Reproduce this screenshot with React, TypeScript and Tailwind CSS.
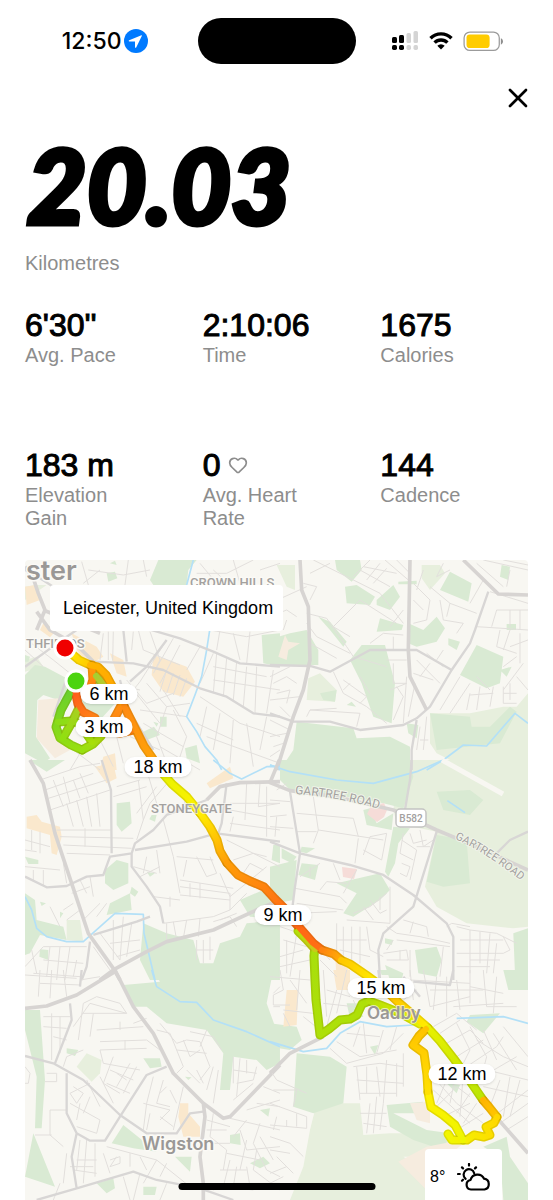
import { Heart, X } from 'lucide-react'

const stats = [
    { value: "6'30''", label: 'Avg. Pace' },
    { value: '2:10:06', label: 'Time' },
    { value: '1675', label: 'Calories' },
    { value: '183 m', label: 'Elevation Gain' },
    { value: '0', label: 'Avg. Heart Rate', heart: true },
    { value: '144', label: 'Cadence' },
]

const markers = [
    { label: '6 km', place: 'left-[84px] top-[134px]' },
    { label: '3 km', place: 'left-[79px] top-[167px]' },
    { label: '18 km', place: 'left-[133px] top-[207px]' },
    { label: '9 km', place: 'left-[258px] top-[355px]' },
    { label: '15 km', place: 'left-[356px] top-[428px]' },
    { label: '12 km', place: 'left-[437px] top-[514px]' },
]

// Map tiles, drawn at three units per pixel
const tiles = [
    {
        x: 0,
        y: 550,
        light: 'M140 105L75 150V110L110 105ZM75 330L110 320 130 350 75 365Z',
        parks: 'M475 30H590L565 60 560 105H460L450 90ZM75 375L105 345 135 350 200 385 235 380 215 425 190 455 130 435 112 450 108 560 150 625 130 640 75 610ZM300 435L350 455 300 510 250 490 240 450ZM430 545L462 530 480 555 440 570ZM555 595L590 585 600 640 560 625ZM480 500H500V530H480ZM785 255L840 250V350L790 340ZM320 70L345 65 352 85 325 95ZM75 315L90 320 85 335H75ZM460 515L475 520 470 530ZM330 40L345 32 350 45Z',
        beige: 'M115 450L175 445 165 540 210 600 165 625 110 565Z',
        shops: 'M460 315L520 335 560 350 585 395 550 440 490 425 455 375ZM75 110L105 105 120 150 80 165ZM215 250L290 290 310 320 265 345 230 300ZM330 310L370 330 380 380 350 370ZM155 60L200 58 205 75 160 80ZM130 220L170 240 150 262 120 240ZM310 620L345 610 350 660 300 660Z',
        water: 'M580 30L560 105M630 235L620 300 605 380 585 435 560 500 590 545 615 590 650 630 665 660',
        minor: 'M75 265L160 330 210 370M75 300L130 350M75 355L160 290M300 60L250 100M245 35L265 105M265 60L370 75 450 60M385 30L375 105M430 30L440 80M600 40L650 100M590 70H680L760 30M700 30L720 100M640 60L690 105M780 60L840 40M310 250L300 330M325 245V330M340 245L338 332M400 245L395 300M415 240L430 300M450 245L480 330 470 350M430 300L540 345M500 270L420 395 400 420M520 265L460 370M540 285L480 400M600 290L560 360M640 310L600 400M380 390L440 460 520 430M400 420L480 520M440 400L500 470 570 460M490 420L540 500M500 360L480 425M520 370L500 430M540 375L520 435M560 385L540 440M330 400L420 420M350 410L330 440M650 310L640 430M680 325L670 440M710 335L700 450M740 350L730 470M770 350L765 490M640 350L800 380M630 240L740 260 840 240M660 240L650 300M700 250L720 330M750 245L740 340M640 390L840 420M600 440L720 520 840 560M620 470L600 560M660 490L640 600M700 510L690 640M740 520L760 650M620 560L840 640M590 520L700 570M500 470L470 560 500 640M520 480L560 560 530 650M420 480L560 500M430 520L550 590M480 590L600 660M390 560L480 600M350 560L370 640M300 570L340 650M220 600L300 660M240 610L210 660M800 500L780 600M820 360L800 490M740 200L840 230',
        medium: 'M280 335L400 340 490 360 600 415 680 440 760 490 840 500M420 230L540 265 640 305 720 340 840 350M390 395L440 350 500 270M370 240L380 335M75 60L105 75 190 130M360 390L380 470 460 600M75 350L200 260 230 240M200 385L160 500',
        major: 'M75 50L100 85 115 130 135 180 110 240M110 185L150 240 230 285 280 335M130 180L300 250',
    },
    {
        x: 270,
        y: 550,
        light: 'M455 45L510 45 525 70 480 120 455 85ZM20 45L75 45 75 120 50 110ZM115 385L150 370 200 420 195 455 110 450ZM480 490H600L700 470H740L774 430V660H600L500 610 480 580Z',
        parks: 'M195 30H270L275 60 245 95 200 60ZM225 110L260 105 315 140 300 165 230 160ZM320 150L370 105 390 140 360 180 320 165ZM540 65L605 100 595 155 510 120ZM415 220L460 240 500 200 525 235 500 275 440 290 415 280ZM0 268L60 250 110 240 145 300V345H0ZM330 205L400 225 395 240 320 245ZM240 330L275 285 345 285 375 400 365 520 310 500 275 400ZM620 285L700 320 690 400 650 415 570 375ZM695 45L720 50 715 90 690 80ZM80 515L250 535 260 565 360 560 420 590V660H30L70 600ZM480 490L600 500 605 530 660 530 720 470 740 485 690 580 500 600ZM145 200L180 215 230 275 220 290 180 240ZM150 430L200 420 195 455 160 450ZM535 265L570 275 560 300 535 285ZM690 360L725 350 710 380ZM410 520L445 525 440 565 415 550ZM385 95L440 92V103H385ZM710 222H738V240H710ZM230 465L245 455 258 470Z',
        beige: 'M45 255L55 275 90 280 55 300 50 330 25 320Z',
        shops: '',
        water: 'M0 645L15 650 30 660M470 660L520 630 580 585 650 588 735 490 774 520',
        minor: 'M130 30L330 130 400 220M120 70L180 40M100 100L140 110 120 150M270 60L360 110M300 30L250 80M330 40L290 90M350 55L310 100M280 50L380 70M345 30L415 90M380 30L420 70M190 230L270 150 380 220M240 260L190 230M110 190L170 205 230 290 250 320M110 220L140 260 240 310M120 280L200 325M300 280L340 250 400 255M370 260V300M400 180L360 230M430 100L480 150 470 210 430 220M430 150L460 180M480 110L540 160 620 190M460 60L440 120M520 40L500 80 540 60M510 150L520 210 580 220 560 250M540 160L530 200M640 90L600 160M680 180H774M680 180L665 230M720 180V230M750 180V240M620 230L774 240M690 240L680 290 740 310M720 240L700 300M750 250V340M774 270L720 290M740 320L700 350M760 340L700 420M470 310L520 350M440 330L510 400M480 340L450 380M520 300L500 330M430 370L490 390M350 330H410M370 340V400H410M360 420L410 400M190 365L220 430 290 470 350 520M220 390L290 440 270 460M240 400L220 420M250 320L350 350M270 380L300 430M120 480L270 490 260 530M110 500L120 480 200 475M380 410L400 440 370 510M410 380L400 520M435 400L415 500M0 380L60 350M10 400L50 380 80 400M20 430L60 420 50 460M0 450L90 440M30 470L60 500M0 510L60 540M0 560L50 550M10 590L40 580M0 620L30 600M570 380L510 480M600 400L540 490M600 430L590 480M630 410L620 480M600 435L670 430M670 410L660 470M700 410V460H740M700 430H740M720 400V450M620 380L660 420M740 380L774 420M0 200L50 180 80 200M0 160L110 110M50 210L40 240M640 30L774 60M620 40L700 110M700 30L774 45M660 125L774 160M720 60L710 110M450 530L440 600M470 500L460 600M450 570H475',
        medium: 'M0 345L120 348 180 365 300 300 440 300 545 360M655 125L615 240 600 280 545 360 480 470 440 505 400 525 270 540 180 515 70 515 0 490M440 510L425 600V660',
        major: 'M90 30L95 120 115 170 120 330 100 420 70 500 20 660M420 30L415 300 420 380 470 480M580 30L685 132 774 135',
    },
    {
        x: 0,
        y: 760,
        light: 'M200 480L240 480 250 545 200 540Z',
        parks: 'M85 0H195L140 35ZM350 130L390 125 395 190 365 215 350 195ZM315 330L350 300 385 310V370L340 390 315 370ZM330 430L390 400 395 450 320 465ZM75 400L105 420 110 480 190 500 200 540 120 525 90 580 75 585ZM430 490L500 520 580 540 600 610H640L660 550 720 530 740 490 840 480V660H450L420 600ZM720 420L790 390 840 440V480L750 470ZM75 290L115 300V312H85ZM120 568L145 570V600L118 590ZM455 165L470 165 465 185 448 178ZM440 335L465 340 450 350ZM820 255H840V310L815 300ZM120 425L138 430 125 438ZM180 455L190 460 180 475ZM395 380L415 395 405 410 390 400Z',
        beige: '',
        shops: 'M80 170L110 165 125 185 180 200 185 230 170 285 155 280 150 225 80 205ZM285 20L340 10 350 55 320 70ZM620 70L690 20 700 55 630 85Z',
        water: 'M75 410L95 450 110 505 140 530 200 545 250 545 345 460 430 463 432 520 465 660M640 0L690 40 725 57 800 20 840 20',
        minor: 'M120 60L240 20 300 10M135 90L280 40M145 115L320 60M150 150L330 90M160 60L190 140M190 50L210 130M220 60L240 115M240 40L265 100M200 130L220 200M230 120L250 200M260 110L275 200M290 100L300 200M170 210H335M180 230L400 235M190 255L395 265M200 280L330 285M255 205V260M350 80L420 60M340 110L440 80M415 60L430 180M440 30L470 130M470 80L410 160M510 60L450 130 430 180 410 240M500 160L580 130M560 150L550 110M490 180L520 290 540 400M530 290L640 300M560 300L550 350M590 290L620 350 650 340 630 290M540 360L700 385M540 380L690 400M540 405L690 420M570 370V410M600 370V415M660 340L690 410 800 320M700 300L760 280 800 290M730 340L750 310 790 330M680 240L840 320M700 170L690 215M740 70L735 180M780 70L775 140 840 130M690 130H840M690 150L800 170M690 190L840 210M800 80V230M400 320L470 340M420 350L480 320M440 290L430 340M470 270L480 340M460 410L540 420M510 410V440M490 490L640 470 690 450M560 480L550 535M600 475L595 530M500 490V540M520 485L530 540M690 400V450L740 400M710 500L690 470 640 485M75 240L150 260M75 270L110 275M95 210V270M120 215V280M75 320L180 330M100 330V365M130 330V375M190 310L200 370M240 360L260 400M270 350L280 410M215 400L270 380M220 430L190 450M240 450L200 480M150 440L180 500M300 430L250 480M290 470L320 430M340 480V600M370 470L360 600M395 490L380 590M300 520L360 600M330 550L420 540M350 590L420 570M75 620L130 560 260 560M95 570L110 640M130 600L250 610M150 560L140 650M180 560L170 660M210 560L195 660M100 640L240 650M230 600L220 650M590 540V600M610 540V610M630 530V600M590 570H640M280 560L330 630M660 480L710 460',
        medium: 'M75 350L140 382 200 378 260 350 310 345 330 290 395 280 405 250 460 210 500 165 620 120M305 0L333 90 335 280M395 280V320L440 380 480 440 490 490M405 270L560 245 650 220 840 245M680 70L665 190 655 220M270 545L260 620 245 660M280 525L410 485 450 470',
        major: 'M90 0L130 70 165 220 215 370 265 520 340 625 360 660M300 660L340 630 440 575 500 545 640 510 770 450 840 420M620 120L660 80 720 68 840 65',
    },
    {
        x: 270,
        y: 760,
        light: 'M390 0H774V500L730 505 590 490 500 440 465 380 500 215 380 190 370 150Z',
        parks: 'M30 0H420L430 50 400 145 340 130 200 105 60 90 30 60ZM500 225L590 240 600 370 520 380 470 365ZM0 320L80 300 70 420 20 430 0 380ZM200 370L330 340 360 390 330 420 250 470 220 460 260 400ZM435 570L500 560 515 600 500 650 445 640ZM730 520L774 505V640H735ZM370 200L420 205 385 250 375 310 355 350 345 335ZM0 530L25 500V660H0ZM280 150L300 145 320 190 370 160 365 210 290 195ZM95 310L145 315 135 360 85 345ZM95 260L135 265 110 280 90 275ZM35 265L80 290 65 310 35 295ZM345 535L370 540 365 555 345 550ZM345 615L400 640 395 660H360ZM500 95L600 90 640 120 600 165 520 150Z',
        beige: '',
        shops: 'M195 580L230 600 240 660H200Z',
        water: 'M0 15L60 35 200 60 310 70 440 35 520 0M532 122L585 158',
        minor: 'M0 60L20 80M20 90L50 70M0 120L60 125M0 170L50 165M20 170L15 230M80 160L250 175 265 230M130 110L145 210 340 240M145 210L130 250M80 215H140M265 235L255 310M280 285L300 230 350 220 335 300 280 270M0 200L70 205M75 385L210 410 230 430M80 430L220 450M75 460L200 455M150 390L170 365 230 370M90 350L150 310M120 320V350M190 310L210 360M260 330L220 400M395 240L440 270M400 220L390 280 430 300M420 220L430 250 470 240M450 210L460 260 490 240M440 260L480 260M440 270L420 360M395 310L420 320 410 350 390 340M360 380V490M250 460L300 440 350 400M280 440L310 480M300 420L330 460 350 450M230 480L360 490M330 410V450M200 490V600M220 500V590M245 500V600M270 500V610M200 540H290M210 570L300 590M290 500L300 570 340 590M350 500L380 520 450 530 540 550M380 540L540 560M400 480L470 500 475 530M430 485L420 520M340 580L410 570 415 600 350 600M350 570L370 540M390 570V600M530 500L545 490 600 500M560 500L600 510 680 520 740 550M570 540H700M600 510V640M560 580H700M630 515V610M660 520L650 640M680 550L670 640M700 530L720 570 700 580M600 600H690M560 620L660 620M30 500L120 530 180 600M40 540L110 560M30 590L100 570M50 540V640M80 520L60 650M30 620L120 600M0 500L60 480M150 600L200 650M420 570V650M520 560L510 650',
        medium: 'M60 95L90 280 75 380 65 460M0 245L90 280 240 315 340 345 430 405 530 490 550 530V660M500 215L430 440 340 520 325 570 330 660M425 0L420 60 405 150M670 290L720 240 774 215',
        major: 'M28 0L0 68 60 92 200 110 370 150 500 210 620 260 774 330',
    },
    {
        x: 0,
        y: 970,
        light: 'M230 290L260 250 305 270 300 310 275 335Z',
        parks: 'M370 45L480 35 460 0H820L800 100 840 210V280L800 300 770 270 700 260 690 360H660L670 250 620 180 500 160 440 110 400 110ZM75 120H120L135 330 125 475H105L110 320 75 180ZM100 490L165 650 75 620ZM430 265L480 265 485 290 450 295ZM335 520L370 465 470 545 400 535ZM290 640L340 625 345 655 320 670ZM525 560L575 560 570 605ZM690 495L720 490 722 525 690 520ZM200 235L235 240 225 258 200 250ZM750 580L790 560 810 580 780 595ZM430 650L470 650 465 675 430 675ZM780 420L810 415 805 440ZM555 320L575 322 565 330Z',
        beige: '',
        shops: 'M540 400H565V430L600 470V500H550L535 440Z',
        water: 'M455 0L470 50 540 95 590 97 640 150 740 185 840 230',
        minor: 'M75 15L230 25M120 0L115 80M155 0L150 85M190 0L200 80M120 40L240 45M240 30L300 20M130 140H210M130 170L200 175M155 130V270M180 140V250M160 200L200 210M220 170L270 100 380 130 360 100 290 80 250 100 235 210M245 130H380M280 130L270 200M300 215L440 210 480 240M300 240L440 235M290 180L430 170M360 155V180M400 160L440 145M375 210V240M300 240L310 280 420 300M340 260L310 340 360 370M390 280L350 350M410 290L370 370M330 300L400 330M320 340L390 370M350 310L380 330M250 240L200 260 190 290M260 330L300 410M300 320L340 400M270 340L210 370 230 400 250 370 220 350M210 400L300 450 290 490 230 470M240 400L230 450M270 380L250 430M150 420H200M150 420V495L190 530M105 495H155M140 310H170V335H135M470 180L510 190 550 290 530 310M480 160L530 220 560 210 600 215 630 290 600 330M530 240L620 250M550 210L570 260 600 240M570 185L640 200 665 240M620 180L600 230M640 290L620 360M655 300L640 400M560 300L600 340M590 300L610 340M700 260V340M720 265L710 380M700 300L770 310M740 270V310M770 290L760 330 710 340M460 320L440 400 430 480M490 330L470 400 510 410M500 350L480 370M430 400L510 420 480 450M450 430L440 480M510 360L530 400M480 440L520 470M550 350L520 480M640 430L630 500 680 540 670 600M690 445L840 480M740 450L700 500M780 460L760 520M720 480L740 540 840 530M740 510L720 600M760 520L800 600 840 620M780 500L820 570M680 550L780 570M690 570L670 650 760 660M710 590L700 650M740 590L750 650M660 600H740M770 540L760 600 840 660M620 450L690 470M620 480H680M320 530L470 570 570 650M310 550L330 610M350 560L330 590 360 580V560L330 570M390 550V590M420 560L440 600M470 570L430 640M500 580L480 620M240 510L230 600M260 510L250 640M285 520V620M200 550L190 640M230 570H290M220 600L290 610M75 290L90 310 85 340H75M210 590H280M700 390L760 340M770 400L840 410M740 420L840 390M790 350L840 370M820 70L840 50M820 110H840M620 520L690 520M180 640L160 690M370 620L390 690M420 610L400 690M500 640L480 690M640 660L700 640 840 640',
        medium: 'M75 258L160 280 250 330 360 435 440 490 530 490 570 430 610 425M210 100L215 150 165 280M200 310V430L230 490 270 512H315L360 440 440 315 500 290M110 690L230 655 400 605 470 630 600 655 700 690M230 490L215 560 230 655M240 50L245 0',
        major: 'M75 115L140 108 230 75 345 5M345 0L400 110 460 190 520 310 610 400 670 445 690 440 840 285M610 400L615 440 600 560 610 640V690',
    },
    {
        x: 270,
        y: 970,
        light: 'M140 400L270 400 280 495 360 490 540 490 560 530 460 560 400 560 470 600 480 690H60L100 590 120 480Z',
        parks: 'M80 250L180 260 230 290 220 400 130 430 70 410ZM350 405L460 395 450 430 370 430 470 480 540 490 520 540 430 510 360 470ZM600 135L690 130 640 190 590 155ZM700 0H774V60H715ZM0 160L80 170 95 210 60 240 0 230ZM230 100H260L280 140 240 145ZM640 530L710 500 720 560 774 640V690H700L690 560ZM300 230L325 225 315 255ZM530 340L570 345 560 370ZM330 0H360V15H335ZM440 195L460 200 450 210Z',
        beige: 'M385 575L470 530 600 505 480 600 470 660ZM420 400L480 395 480 460 440 450Z',
        shops: 'M50 60H85L80 165 40 170ZM190 0H240V60L200 60Z',
        water: 'M0 215L100 245 170 235 210 190 270 155 350 170 430 165M560 145L700 140 774 160',
        minor: 'M0 20L120 30M30 0L40 60 10 75V105H60M60 30L110 100M90 0L80 120M40 120L130 130M60 170L40 130M100 140L150 180M160 0L170 140M200 60L170 170M230 0L200 130M170 60L240 80M160 100L250 110M270 140L250 90M180 235L230 280 340 250 400 190M200 215L270 260 380 240M230 190L330 200M250 230L270 170M290 250L280 160M320 250L340 180M360 240L380 170M250 290L330 280 400 290M260 290L270 390M290 290V370M320 290L330 380M350 270L340 400M260 330L400 340M270 370L380 370M380 280V380M400 250V350M300 400L290 490M320 380L310 490M270 430H350M340 400L330 480M280 460L350 470M490 170L560 130 620 180M510 190L570 150M530 220L600 180 640 220M560 260L640 210M590 290L680 230 700 200M620 330L740 260M560 160L600 240 580 280M600 170L650 260 640 300M640 180L680 270M670 190L740 300M700 170L774 260M620 210L700 260 774 290M650 300L774 330M640 350L774 380M690 330L660 410M720 320L700 440M750 330L720 440M670 440L774 360M690 460L774 400M710 480L774 440M480 310L560 400 640 460M490 360L600 460M500 410L560 350 600 380M530 330L500 400M560 300L540 400M580 310L570 440M600 370L560 430M620 400L580 460M520 440L600 400M560 480L640 430M430 90L420 0M460 0L480 110 600 80M500 20L490 120M530 20V140M560 30L570 120M420 30L600 40M480 60H640M600 0V100M640 0L650 110 740 110M680 20L670 130M600 50L700 70M440 60L400 90M550 110L700 100M0 300L20 330 110 370M10 360H80L70 410M0 400L110 440V475L0 465M20 440L10 480M50 450V470M80 430V470M0 500L60 520 100 560M0 540L60 550M20 560L70 610M0 610L50 590M0 640L40 620',
        medium: 'M325 0L330 40M430 35L540 45 550 0M400 20L450 80',
        major: 'M0 310L60 250 160 200M660 420L774 550',
    },
]

// Pace-coloured stretches of the run, from first point to last
const route: { points: number[][]; from: string; to: string }[] = [
    { points: [[72, 690], [67, 699], [61, 710], [56, 727], [60, 738], [71, 745], [82, 750]], from: '#69d02d', to: '#98e010' },
    { points: [[82, 750], [93, 744], [101, 736], [96, 726]], from: '#98e010', to: '#b4d60a' },
    { points: [[58, 722], [72, 721], [80, 724], [92, 742]], from: '#8bdc18', to: '#a8df08' },
    { points: [[63, 738], [72, 722], [79, 708]], from: '#91e010', to: '#a9cf20' },
    { points: [[75, 690], [78, 704], [83, 712], [95, 718]], from: '#ff5a1c', to: '#ff8417' },
    { points: [[92, 665], [93, 680], [88, 692]], from: '#ff9c0a', to: '#ff7a14' },
    { points: [[96, 676], [106, 688]], from: '#a6cf30', to: '#c0c82b' },
    { points: [[121, 706], [114, 719], [108, 731], [120, 733], [133, 730]], from: '#ff8d12', to: '#ff8010' },
    { points: [[65, 648], [79, 660], [90, 665]], from: '#fff200', to: '#ffc800' },
    { points: [[90, 665], [98, 667], [106, 675], [113, 688], [124, 706]], from: '#ffb300', to: '#ffa000' },
    { points: [[124, 706], [131, 720], [138, 734], [144, 746], [158, 766]], from: '#ff8a12', to: '#ffa708' },
    { points: [[158, 768], [172, 784], [187, 797], [200, 813]], from: '#e5f300', to: '#fff000' },
    { points: [[200, 813], [210, 827], [217, 840], [220, 851], [227, 863]], from: '#ffee00', to: '#ff9e08' },
    { points: [[227, 863], [238, 875], [250, 881], [264, 887], [275, 899], [290, 914]], from: '#ff9e08', to: '#ff6b16' },
    { points: [[315, 946], [314, 956], [315, 980], [316, 1000], [320, 1035], [329, 1029], [340, 1020], [350, 1019], [357, 1015], [362, 1004], [369, 1001]], from: '#a8df0c', to: '#aee008' },
    { points: [[369, 1001], [380, 1005], [400, 1013], [420, 1024]], from: '#b4e008', to: '#e8f000' },
    { points: [[298, 931], [306, 939], [315, 949]], from: '#b4e008', to: '#c9c91a' },
    { points: [[286, 912], [298, 926], [313, 943], [322, 950]], from: '#ff6516', to: '#ff6f14' },
    { points: [[322, 950], [334, 954], [341, 960]], from: '#ff8410', to: '#ffb005' },
    { points: [[341, 960], [350, 964], [366, 975], [381, 986]], from: '#ffc800', to: '#fff200' },
    { points: [[381, 986], [398, 1002], [412, 1014], [428, 1028]], from: '#ffb800', to: '#ffee00' },
    { points: [[428, 1028], [440, 1041], [454, 1059], [470, 1081], [483, 1100]], from: '#e8f000', to: '#b9e506' },
    { points: [[483, 1100], [489, 1107], [497, 1117]], from: '#ffb400', to: '#ffc800' },
    { points: [[497, 1117], [494, 1123], [486, 1127], [490, 1135], [484, 1137], [474, 1135], [467, 1140], [452, 1140], [448, 1134]], from: '#ffd800', to: '#f2f600' },
    { points: [[463, 1140], [455, 1125], [443, 1115], [431, 1107], [428, 1092]], from: '#eef600', to: '#fff000' },
    { points: [[428, 1092], [427, 1075], [424, 1053], [413, 1045], [419, 1036], [426, 1029]], from: '#ffe000', to: '#ffc400' },
]

function StatusBar() {
    return (
        <header className="grid grid-cols-[1fr_158px_1fr] items-center pt-[18px]">
            <div className="flex items-center justify-end gap-[2px] pr-[50px]">
                <time className="font-['Inter',sans-serif] text-[23px] leading-6 font-medium">12:50</time>
                <svg viewBox="0 0 24 24" className="size-6" aria-label="Location in use">
                    <circle cx="12" cy="12" r="12" fill="#007aff" />
                    <path d="M17.4 6.3 5.2 11.3c-.7.3-.6 1.2.2 1.2h5.6v5.7c0 .8.9.9 1.2.2L17.8 7c.3-.6 0-.9-.4-.7Z" fill="#fff" />
                </svg>
            </div>
            <div className="h-[46px] rounded-full bg-black" />
            <div className="flex items-center gap-[10px] pl-[36px]">
                <svg viewBox="0 0 27 20" className="h-5 w-[27px]" aria-label="Signal">
                    <g fill="#000">
                        <rect x="0" y="6" width="5" height="6" rx="1.5" />
                        <rect x="7" y="4" width="5" height="8" rx="1.5" />
                        <rect x="0" y="14" width="5" height="5" rx="1.7" />
                        <rect x="7" y="14" width="5" height="5" rx="1.7" />
                    </g>
                    <g fill="#d4d4d4">
                        <rect x="14.5" y="2" width="4.5" height="10" rx="1.5" />
                        <rect x="21.5" y="0" width="4.5" height="12" rx="1.5" />
                        <rect x="14.5" y="14" width="4.5" height="5" rx="1.7" />
                        <rect x="21.5" y="14" width="4.5" height="5" rx="1.7" />
                    </g>
                </svg>
                <svg viewBox="0 0 24 18" className="h-[18px] w-6" fill="none" stroke="#000" strokeWidth="3.4" aria-label="Wi-Fi">
                    <path d="M1.5 6.2a15 15 0 0 1 21 0" />
                    <path d="M5.6 10.6a9 9 0 0 1 12.8 0" />
                    <path d="M8.3 13.8a5.3 5.3 0 0 1 7.4 0L12 17.5Z" fill="#000" stroke="none" />
                </svg>
                <svg viewBox="0 0 38 20" className="h-[21px] w-10" aria-label="Battery">
                    <rect x="1" y="1" width="33.5" height="17.5" rx="5.5" fill="none" stroke="#9b9b9b" strokeWidth="1.2" />
                    <rect x="3.3" y="3.3" width="22" height="13" rx="3.2" fill="#ffcc00" />
                    <path d="M36 7v6c1.3-.6 2-1.7 2-3s-.7-2.4-2-3Z" fill="#8e8e8e" />
                </svg>
            </div>
        </header>
    )
}

function RunMap() {
    return (
        <svg viewBox="25 560 503 640" preserveAspectRatio="xMinYMin slice" className="block size-full" fill="none" strokeLinejoin="round">
            <rect x="25" y="560" width="503" height="640" fill="#f8f7f2" />
            {tiles.map((t) => (
                <g key={`${t.x}-${t.y}-land`} transform={`translate(${t.x} ${t.y}) scale(0.3333)`}>
                    <path d={t.light} fill="#e7efdd" />
                    <path d={t.parks} fill="#d9ead3" />
                    <path d={t.beige} fill="#f6ecdf" />
                    <path d={t.shops} fill="#fae8cd" />
                </g>
            ))}
            <path d="M371 806l13-3 3 7-3 7-7 5-10-8ZM342 867l15 2-3 10-11-2Z" fill="#f6dcd8" />
            {tiles.map((t) => (
                <g key={`${t.x}-${t.y}-roads`} transform={`translate(${t.x} ${t.y}) scale(0.3333)`}>
                    <path d={t.minor} stroke="#e2dfdc" strokeWidth="3" />
                    <path d={t.water} stroke="#b3e0f7" strokeWidth="5" />
                    <path d={t.medium} stroke="#d8d6d5" strokeWidth="7" />
                    <path d={t.major} stroke="#d7d4d2" strokeWidth="11" />
                </g>
            ))}
            <path d="M442 760l61 34" stroke="#f8f7f2" strokeWidth="5" />

            <g className="font-['Roboto',sans-serif] font-medium" fill="#a3a19f" stroke="#fbfaf6" strokeWidth="3" paintOrder="stroke">
                <text x="190" y="587" fontSize="13">CROWN HILLS</text>
                <text x="26" y="648" fontSize="13">THFIELDS</text>
                <g className="font-['Inter',sans-serif] font-semibold" fill="#9a9896">
                    <text x="26" y="580" fontSize="27">ster</text>
                    <text x="142" y="1150" fontSize="18">Wigston</text>
                </g>
            </g>
            <path id="gartree-west" d="M295 794Q340 797 390 812" />
            <path id="gartree-east" d="M455 839Q490 854 536 893" />
            <g className="font-['Roboto',sans-serif]" fill="#a3a19f" stroke="#f1f4ea" strokeWidth="2" paintOrder="stroke" fontSize="12">
                <text><textPath href="#gartree-west">GARTREE ROAD</textPath></text>
                <text fontSize="11"><textPath href="#gartree-east">GARTREE ROAD</textPath></text>
            </g>
            <rect x="396" y="809" width="30" height="18" rx="4" fill="#fff" stroke="#c4c4c2" strokeWidth="1.5" />
            <text x="411" y="822" textAnchor="middle" fontSize="10" fill="#a3a19f" className="font-['Roboto',sans-serif] font-medium">B582</text>

            <defs>
                {route.map((s, i) => {
                    const [x1, y1] = s.points[0]
                    const [x2, y2] = s.points[s.points.length - 1]
                    return (
                        <linearGradient key={i} id={`pace-${i}`} gradientUnits="userSpaceOnUse" x1={x1} y1={y1} x2={x2} y2={y2}>
                            <stop offset="0" stopColor={s.from} />
                            <stop offset="1" stopColor={s.to} />
                        </linearGradient>
                    )
                })}
            </defs>
            <g strokeLinecap="round">
                {route.map((s, i) => (
                    <polyline key={i} points={s.points.join(' ')} stroke={`url(#pace-${i})`} strokeWidth="9" />
                ))}
                {route.map((s, i) => (
                    <polyline key={i} points={s.points.join(' ')} stroke="#6b5a00" strokeOpacity="0.15" strokeWidth="9" />
                ))}
                {route.map((s, i) => (
                    <polyline key={i} points={s.points.join(' ')} stroke={`url(#pace-${i})`} strokeWidth="6" />
                ))}
            </g>
            <text x="151" y="813" fontSize="13" fill="#a3a19f" stroke="#fbfaf6" strokeOpacity="0.6" strokeWidth="2" paintOrder="stroke" className="font-['Roboto',sans-serif] font-medium">STONEYGATE</text>
            <text x="367" y="1019" fontSize="17" fill="#9a9896" stroke="#fbfaf6" strokeOpacity="0.7" strokeWidth="2" paintOrder="stroke" className="font-['Inter',sans-serif] font-semibold">Oadby</text>
            <circle cx="76" cy="681" r="10" fill="#4cd410" stroke="#fff" strokeWidth="3" />
            <circle cx="65" cy="648" r="10" fill="#f00000" stroke="#fff" strokeWidth="3" />
        </svg>
    )
}

function WeatherIcon() {
    return (
        <svg viewBox="0 0 34 28" className="h-7 w-[34px]" fill="none" stroke="#000" strokeWidth="2.2" strokeLinecap="round" strokeLinejoin="round" aria-label="Partly cloudy">
            <path d="M8.6 15.8a5.4 5.4 0 1 1 8.6-5.6" />
            <path d="M12 2.6V1M6 5.4 5 4.400M2.800 11H1M6 16.700l-1 1M18 5.400l1-1" />
            <path d="M14 26.500a4.800 4.800 0 0 1-.5-9.500 7.300 7.300 0 0 1 13.600-1.300 5.500 5.500 0 0 1 .4 10.800Z" />
        </svg>
    )
}

export default function App() {
    return (
        <main className="relative min-h-screen w-full overflow-hidden bg-white font-['Liberation_Sans',Arial,sans-serif] text-black">
            <StatusBar />
            <div className="flex justify-end pt-[18px] pr-[19px]">
                <button type="button" aria-label="Close">
                    <X className="size-8" strokeWidth={2} />
                </button>
            </div>

            <section className="px-[25px] pt-[16px]">
                <h1 className="pl-[2px] font-['Lato',sans-serif] text-[103px] leading-[108px] font-black italic [-webkit-text-stroke:5px_black]">20.03</h1>
                <p className="pt-[14px] text-xl leading-[23px] text-[#8d8d8d]">Kilometres</p>
            </section>

            <dl className="grid grid-cols-3 gap-x-[30px] gap-y-[79px] px-[25px] pt-[31px]">
                {stats.map((s) => (
                    <div key={s.label} className="flex flex-col">
                        <dd className="flex items-center gap-2 text-[32px] leading-[38px] [-webkit-text-stroke:1px_black]">
                            {s.value}
                            {s.heart && <Heart className="size-5 text-[#8d8d8d]" strokeWidth={2} />}
                        </dd>
                        <dt className="max-w-[110px] text-xl leading-[23px] text-[#8d8d8d]">{s.label}</dt>
                    </div>
                ))}
            </dl>

            <section className="relative mx-[25px] mt-[30px] h-[640px] overflow-hidden rounded-t" aria-label="Route map">
                <RunMap />
                <div className="absolute top-[25px] left-[25px] rounded bg-white pr-[10px] pl-[13px] text-lg leading-[46px]">
                    Leicester, United Kingdom
                </div>
                {markers.map((m) => (
                    <span
                        key={m.label}
                        className={`absolute -translate-x-1/2 -translate-y-1/2 rounded-full bg-white px-[9px] text-lg leading-[20px] whitespace-nowrap shadow-sm ${m.place}`}
                    >
                        {m.label}
                    </span>
                ))}
                <div className="absolute right-[26px] bottom-0 flex h-[51px] w-[77px] items-center justify-between rounded-t bg-white pt-1 pr-[11px] pl-[5px] text-base">
                    8°
                    <WeatherIcon />
                </div>
            </section>

            <div className="absolute bottom-[10px] left-1/2 h-[7px] w-[197px] -translate-x-1/2 rounded-full bg-black" />
        </main>
    )
}
